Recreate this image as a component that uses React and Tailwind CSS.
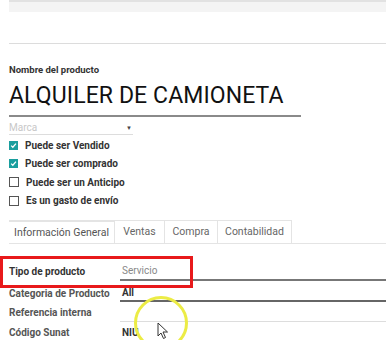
import React from "react";

function Check({ checked }) {
  return checked ? (
    <span className="w-[9px] h-[9px] bg-[#1a9e9e] flex items-center justify-center shrink-0">
      <svg width="7" height="7" viewBox="0 0 8 8"><path d="M1.3 4.2 L3.2 6 L6.8 1.8" stroke="#fff" strokeWidth="1.4" fill="none" /></svg>
    </span>
  ) : (
    <span className="w-[10px] h-[10px] border border-[#555] bg-white shrink-0" />
  );
}

export default function App() {
  const checks = [
    ["Puede ser Vendido", true],
    ["Puede ser comprado", true],
    ["Puede ser un Anticipo", false],
    ["Es un gasto de envío", false],
  ];
  return (
    <div className="w-[386px] h-[340px] bg-white overflow-hidden relative" style={{ fontFamily: "Roboto, 'Noto Sans', sans-serif" }}>
      <div className="ml-[9px] h-[12px] bg-[#f4f4f4] border-t-2 border-[#e2e2e2]" />
      <div className="ml-[9px] mt-[31px] h-[1px] bg-[#dcdcdc]" />
      <div className="pl-[9px] pt-[20px]">
        <div className="text-[9.5px] font-bold text-[#333] leading-[12px]">Nombre del producto</div>
        <div className="text-[23px] text-[#111] leading-[28px] mt-[6px] tracking-[0.1px]">ALQUILER DE CAMIONETA</div>
        <div className="w-[292px] h-[2px] bg-[#8a8a8a] mt-[5px]" />
        <div className="w-[124px] mt-[4px] flex items-center justify-between border-b border-[#ddd] h-[14px]">
          <span className="text-[10px] text-[#c8c8c8]">Marca</span>
          <span className="text-[6px] text-[#444] mr-[1px]">▼</span>
        </div>
        <div className="flex flex-col mt-[1px]">
          {checks.map(([t, c]) => (
            <div key={t} className="flex items-center h-[18.5px] gap-[7px]">
              <Check checked={c} />
              <span className="text-[10px] font-bold text-[#333]">{t}</span>
            </div>
          ))}
        </div>
        <div className="mt-[10px] flex border-b border-[#e4e4e4] h-[24px] items-stretch">
          <div className="w-[106px] border-t-2 border-[#cfcfcf] bg-white border-r border-[#e4e4e4] flex items-center justify-center text-[10.5px] text-[#555]">Información General</div>
          <div className="w-[50px] border-t border-r border-[#e4e4e4] flex items-center justify-center text-[10.5px] text-[#666]">Ventas</div>
          <div className="w-[53px] border-t border-r border-[#e4e4e4] flex items-center justify-center text-[10.5px] text-[#666]">Compra</div>
          <div className="w-[74px] border-t border-r border-[#e4e4e4] flex items-center justify-center text-[10.5px] text-[#666]">Contabilidad</div>
        </div>
      </div>
      <div className="mt-[18px] flex flex-col">
        <div className="flex h-[19px] items-center">
          <span className="w-[120px] pl-[9px] text-[10px] font-bold text-[#333]">Tipo de producto</span>
          <span className="flex-1 h-full flex items-center border-b-2 border-[#777] pl-[2px] text-[10px] text-[#888]">Servicio</span>
        </div>
        <div className="flex h-[18px] mt-[3px] items-center">
          <span className="w-[120px] pl-[9px] text-[10px] font-bold text-[#555]">Categoria de Producto</span>
          <span className="flex-1 h-full flex items-center border-b-2 border-[#666] pl-[2px] text-[10px] font-bold text-[#333]">All</span>
        </div>
        <div className="flex h-[20px] items-center">
          <span className="w-[120px] pl-[9px] text-[10px] font-bold text-[#555]">Referencia interna</span>
          <span className="flex-1 h-full border-b border-[#ddd]" />
        </div>
        <div className="flex h-[20px] items-center">
          <span className="w-[120px] pl-[9px] text-[10px] font-bold text-[#555]">Código Sunat</span>
          <span className="flex-1 pl-[2px] text-[10px] font-bold text-[#333]">NIU</span>
        </div>
      </div>
      <div className="absolute left-0 top-[256px] w-[193px] h-[32px] border-[3px] border-[#e8191b]" />
      <div className="absolute left-[134px] top-[296px] w-[54px] h-[54px] rounded-full border-[3px] border-[#ecec45]" />
      <svg className="absolute left-[157px] top-[322px]" width="12" height="18" viewBox="0 0 12 18">
        <path d="M1 1 L1 14 L4 11 L6.5 16.5 L8.5 15.5 L6 10 L10.5 10 Z" fill="#fff" stroke="#333" strokeWidth="1" strokeLinejoin="round" />
      </svg>
    </div>
  );
}
